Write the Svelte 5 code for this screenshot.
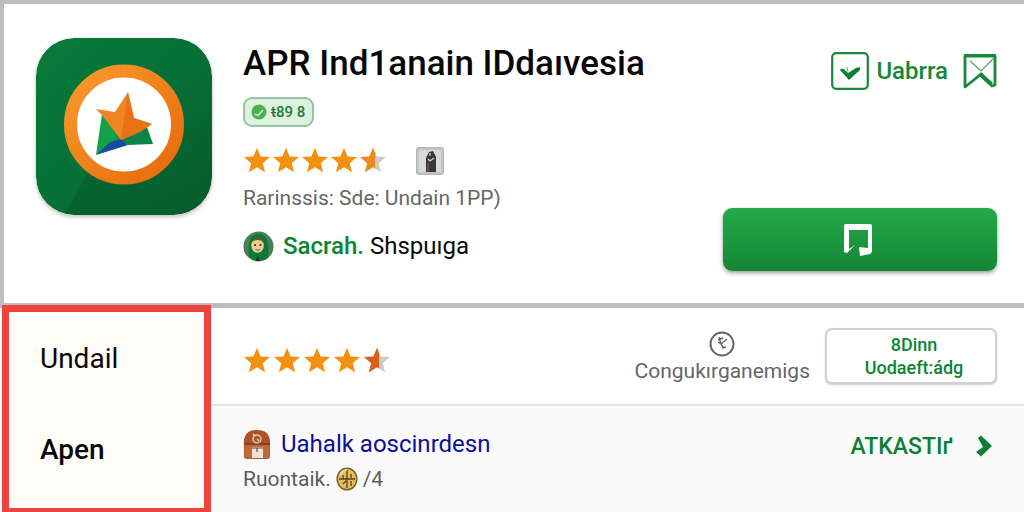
<script>
  const star = 'M12 0.6 L15.3 8.7 L24 9.3 L17.3 15 L19.5 23.4 L12 18.8 L4.5 23.4 L6.7 15 L0 9.3 L8.7 8.7 Z';
  const stars = [0, 1, 2, 3, 4];
</script>

{#snippet rating(half)}
  <div class="stars" role="img" aria-label="4.5">
    {#each stars as i}
      <svg viewBox="0 0 24 24" width="26" height="26">
        {#if i < 4}
          <path d={star} fill="#f4900f" />
        {:else}
          <path d={star} fill="#cfcbc9" />
          <path d="M12 0.6 L14 5.5 V20 L12 18.8 L4.5 23.4 L6.7 15 L0 9.3 L8.7 8.7 Z" fill={half} />
        {/if}
      </svg>
    {/each}
  </div>
{/snippet}

<main>
  <header class="hero">
    <svg class="logo" viewBox="0 0 176 177" width="176" height="177">
      <defs>
        <linearGradient id="base" x1="0" y1="0" x2="1" y2="1">
          <stop offset="0" stop-color="#0a7a3a" />
          <stop offset="0.5" stop-color="#067037" />
          <stop offset="1" stop-color="#065c2c" />
        </linearGradient>
        <linearGradient id="ring" x1="0" y1="0" x2="1" y2="1">
          <stop offset="0" stop-color="#fb9a2b" />
          <stop offset="1" stop-color="#e5690c" />
        </linearGradient>
        <linearGradient id="leaf" x1="0" y1="0" x2="1" y2="1">
          <stop offset="0" stop-color="#16a047" />
          <stop offset="0.6" stop-color="#12a344" />
          <stop offset="1" stop-color="#0b7f4a" />
        </linearGradient>
        <linearGradient id="shade" x1="0" y1="1" x2="1" y2="0">
          <stop offset="0" stop-color="#045328" stop-opacity="0.45" />
          <stop offset="1" stop-color="#045328" stop-opacity="0" />
        </linearGradient>
        <clipPath id="tile"><rect width="176" height="177" rx="38" /></clipPath>
      </defs>
      <g clip-path="url(#tile)">
        <rect width="176" height="177" fill="url(#base)" />
        <path d="M28 177 L62 118 L176 60 V177 Z" fill="url(#shade)" />
      </g>
      <circle cx="88" cy="86.500" r="53.500" fill="#fff" stroke="url(#ring)" stroke-width="13" />
      <path d="M66 76 L85 101 L60 117 Z" fill="url(#leaf)" />
      <path d="M84 101 L111 89 L117 106 L92 107 Z" fill="#0b8447" />
      <path d="M85 101 L92 107 L60 117 L74 104 Z" fill="#164da0" />
      <path d="M92 54 L98 80 L116 86 L104 94 L85 102 L66 77 L60 71 L79 74 Z" fill="#f08324" />
      <path d="M92 54 L98 80 L116 86 L104 94 L85 102 Z" fill="#e5690f" opacity="0.7" />
    </svg>

    <div class="info">
      <h1>APR Ind1anain IDdaıvesia</h1>
      <span class="badge">
        <svg viewBox="0 0 16 16" width="16" height="16">
          <circle cx="8" cy="8" r="7.500" fill="#4caf50" />
          <path d="M3.500 10 L7 11.500 L12 6" fill="none" stroke="#d9f3dc" stroke-width="1.200" />
        </svg>
        <span>ŧ89 8</span>
      </span>
      <div class="rate-row">
        {@render rating('#ec8a1b')}
        <svg class="thumb" viewBox="0 0 28 28" width="28" height="28">
          <rect x="0.500" y="0.500" width="27" height="27" rx="2" fill="#c1c5c5" stroke="#b0b4b4" />
          <rect x="3" y="3" width="22" height="22" fill="#d7dada" />
          <path d="M10 25 V11 L13 5 L17 4 L20 10 V25 Z" fill="#3c3638" />
          <path d="M12 12 L14 14 L18 11 M14 6 V9" fill="none" stroke="#d9d2d2" stroke-width="1.300" />
          <path d="M12 16 V25" stroke="#756e70" stroke-width="1" />
        </svg>
      </div>
      <p class="meta">Rarinssis: Sde: Undain 1PP)</p>
      <p class="author">
        <svg viewBox="0 0 32 32" width="31" height="31">
          <circle cx="16" cy="16" r="15.500" fill="#4b7d59" />
          <path d="M6 26 C5 10 8 3 16 3 C25 3 27 12 26 27 C21 32 11 32 6 26 Z" fill="#0b7a36" />
          <ellipse cx="15" cy="15" rx="6.500" ry="7.500" fill="#efcb93" />
          <path d="M8.500 13 C10 8 20 8 21.500 13 L20 9 L15 6 L10 9 Z" fill="#6b5a2a" />
          <circle cx="12.500" cy="14.500" r="1.100" fill="#4b2d1b" />
          <circle cx="18" cy="14.500" r="1.100" fill="#4b2d1b" />
          <path d="M13 19 Q15 20.500 17.500 19" fill="none" stroke="#b5463a" stroke-width="1.200" />
          <path d="M13 31 L15 26 L18 31 Z" fill="#3b2423" />
        </svg>
        <span><a href="#author">Sacrah.</a> Shspuıga</span>
      </p>
    </div>

    <div class="actions">
      <div class="quick">
        <button class="check" type="button">
          <svg viewBox="0 0 38 38" width="38" height="38">
            <rect x="1.200" y="1.200" width="35.600" height="35.600" rx="4" fill="none" stroke="#16883a" stroke-width="2.200" />
            <path d="M9 18 Q10 15 14 18 L17 21 L25 16 Q30 14 29 18 L18 28 Z" fill="#0d7f32" />
            <path d="M17 20 L16 15" stroke="#5eae74" stroke-width="1" />
          </svg>
          <span>Uabrra</span>
        </button>
        <button class="save" type="button" aria-label="Simpan">
          <svg viewBox="0 0 34 36" width="34" height="36">
            <path d="M2 3 H32 V32 L29 33 L17 22 L2 34 Z" fill="#fff" stroke="#16883a" stroke-width="2.800" stroke-linejoin="round" />
            <path d="M1 2.500 H33" stroke="#16883a" stroke-width="3" />
            <path d="M7 8 L18 18 L31 5" fill="none" stroke="#5c9b70" stroke-width="1.200" />
            <path d="M17 20 L29 31" stroke="#16883a" stroke-width="3" />
          </svg>
        </button>
      </div>
      <button class="install" type="button" aria-label="Instal">
        <svg viewBox="0 0 30 34" width="30" height="34">
          <path d="M1 3 Q1 1 3 1 H27 Q29 1 29 3 V28 Q29 30 27 31 L17 33 L16 24 L25 25 V7 H6 V26 L12 22 L4 30 L1 29 Z" fill="#fff" />
        </svg>
      </button>
    </div>
  </header>

  <div class="lower">
    <nav>
      <a href="#undail">Undail</a>
      <a href="#apen">Apen</a>
    </nav>
    <div class="rows">
      <section class="reviews">
        {@render rating('#d9601c')}
        <div class="help">
          <svg viewBox="0 0 26 26" width="26" height="26">
            <circle cx="13" cy="13" r="11.500" fill="#fff" stroke="#666" stroke-width="2" />
            <path d="M9 9 L14 7 M10 6 L12 13 L18 8 M12 13 L9 11 M12 13 L14 16 M13 17 L17 16" fill="none" stroke="#666" stroke-width="1.400" />
          </svg>
          <span>Congukırganemigs</span>
        </div>
        <button class="update" type="button">8Dinn<br />Uodaeft:ádg</button>
      </section>
      <section class="related">
        <div class="item">
          <p class="title">
            <svg viewBox="0 0 28 31" width="28" height="31">
              <path d="M1 17 C0 5 5 1 14 1 C23 1 28 5 27 17 V27 Q27 30 24 30 H4 Q1 30 1 27 Z" fill="#a8532c" />
              <path d="M1 15 H27" stroke="#7d381a" stroke-width="1.500" />
              <path d="M1.500 16 H26.500 V27 Q26 29.500 24 29.500 H4 Q2 29.500 1.500 27 Z" fill="#c2693a" />
              <circle cx="14" cy="10" r="4" fill="#a8532c" stroke="#e8c6ad" stroke-width="1.500" />
              <path d="M10 5 L12 7 M14 10 L16 12" stroke="#efd5c3" stroke-width="1.500" />
              <path d="M9 18 H20 V29 H9 Z" fill="#eee1d5" />
              <path d="M9 19 H20 M14 19 V23" stroke="#7d4a30" stroke-width="1.200" />
            </svg>
            <a href="#item">Uahalk aoscinrdesn</a>
          </p>
          <p class="sub">
            <span>Ruontaik.</span>
            <svg viewBox="0 0 22 24" width="22" height="24">
              <ellipse cx="11" cy="12" rx="9.800" ry="10.800" fill="#e3bd5c" stroke="#796030" stroke-width="1.500" />
              <path d="M11 3 V21 M3 12 H19 M7 8 V12 M15 7 V11 M7 17 L10 14 M15 19 V14" stroke="#5c3f20" stroke-width="1.300" />
              <path d="M4 8 Q7 3 11 3" fill="none" stroke="#f6e2a0" stroke-width="1.500" />
            </svg>
            <span>/4</span>
          </p>
        </div>
        <a class="more" href="#more">
          <span>ATKASTIґ</span>
          <svg viewBox="0 0 18 22" width="18" height="22">
            <path d="M3 3 L6 0.500 L17 11 L6 21.500 L1 17 L8 12 Z" fill="#0d7f32" />
          </svg>
        </a>
      </section>
    </div>
  </div>
</main>

<style>
  :global(body) {
    margin: 0;
    background: #fff;
    font-family: Roboto, 'Noto Sans', sans-serif;
  }
  main {
    overflow: hidden;
    color: #080808;
  }
  svg {
    display: block;
    flex: none;
  }
  h1, p {
    margin: 0;
  }
  a {
    color: inherit;
    text-decoration: none;
  }
  button {
    font-family: inherit;
    padding: 0;
    border: 0;
    background: none;
    cursor: pointer;
  }
  .hero {
    display: flex;
    gap: 31px;
    box-sizing: border-box;
    min-height: 308px;
    padding: 34px 27px 32px 32px;
    border: solid #bdbdbf;
    border-width: 4px 0 5px 4px;
  }
  .logo {
    border-radius: 38px;
    box-shadow: 0 2px 4px rgb(0 0 0 / 25%);
  }
  .info {
    flex: 1;
    min-width: 0;
    white-space: nowrap;
  }
  h1 {
    font-size: 35px;
    line-height: 52px;
    font-weight: 500;
  }
  .badge {
    display: flex;
    align-items: center;
    gap: 4px;
    box-sizing: border-box;
    width: max-content;
    height: 30px;
    margin-top: 7px;
    padding: 0 7px 0 6px;
    border: 2px solid #93c69b;
    border-radius: 9px;
    background: #dcf1de;
    color: #237c3a;
    font-size: 15px;
    font-weight: 500;
  }
  .rate-row {
    display: flex;
    align-items: center;
    gap: 30px;
    height: 28px;
    margin-top: 20px;
  }
  .stars {
    display: flex;
    gap: 3px;
    margin: 0 0 2px 1px;
  }
  .meta {
    margin-top: 10px;
    color: #666;
    font-size: 21px;
    line-height: 26px;
  }
  .author {
    display: flex;
    align-items: center;
    gap: 9px;
    margin-top: 19px;
    font-size: 24px;
    line-height: 32px;
  }
  .author a {
    color: #0b8530;
    font-weight: 500;
  }
  .actions {
    display: flex;
    flex-direction: column;
    justify-content: space-between;
    align-items: flex-end;
    flex: 0 0 274px;
    padding-top: 14px;
  }
  .quick {
    display: flex;
    align-items: center;
    gap: 15px;
  }
  .check {
    display: flex;
    align-items: center;
    gap: 7px;
    color: #16883a;
    font-size: 24px;
    font-weight: 500;
  }
  .install {
    display: grid;
    place-items: center;
    width: 100%;
    height: 63px;
    padding-right: 4px;
    border-radius: 9px;
    background: linear-gradient(#23aa48, #148634);
    box-shadow: 0 2px 4px rgb(0 0 0 / 40%);
  }
  .lower {
    display: flex;
  }
  nav {
    box-sizing: border-box;
    flex: 0 0 209px;
    margin: -3px 0 0 2px;
    padding: 30px 0 41px 31px;
    border: 7px solid #ee433e;
    background: #fffbf7;
    font-size: 28px;
    line-height: 34px;
  }
  nav a {
    display: block;
  }
  nav a + a {
    margin-top: 57px;
    font-weight: 500;
  }
  .rows {
    flex: 1;
    min-width: 0;
    display: flex;
    flex-direction: column;
    white-space: nowrap;
  }
  .reviews {
    display: flex;
    align-items: center;
    height: 96px;
    padding: 0 27px 0 32px;
    border-bottom: 2px solid #e5e5e5;
  }
  .reviews .stars {
    gap: 4px;
    margin: 7px 0 0 1px;
  }
  .help {
    display: flex;
    flex-direction: column;
    align-items: center;
    margin: 3px 0 0 auto;
    color: #666;
    font-size: 21px;
    line-height: 28px;
  }
  .update {
    box-sizing: border-box;
    width: 172px;
    height: 56px;
    margin-left: 15px;
    padding-left: 6px;
    border: 2px solid #d0d0d0;
    border-radius: 7px;
    background: #fff;
    box-shadow: 0 1px 2px rgb(0 0 0 / 20%);
    color: #0b8530;
    font-size: 18px;
    line-height: 23px;
    font-weight: 500;
  }
  .related {
    display: flex;
    flex: 1;
    justify-content: space-between;
    padding: 22px 31px 0 32px;
    background: #fafafa;
  }
  .title {
    display: flex;
    align-items: center;
    gap: 10px;
    height: 32px;
    color: #0a109c;
    font-size: 24px;
  }
  .sub {
    display: flex;
    align-items: center;
    gap: 5px;
    margin-top: 6px;
    color: #5c5c5c;
    font-size: 21px;
    line-height: 26px;
  }
  .more {
    display: flex;
    align-items: center;
    gap: 22px;
    height: 36px;
    color: #0d7f32;
    font-size: 23px;
    font-weight: 500;
  }
</style>
